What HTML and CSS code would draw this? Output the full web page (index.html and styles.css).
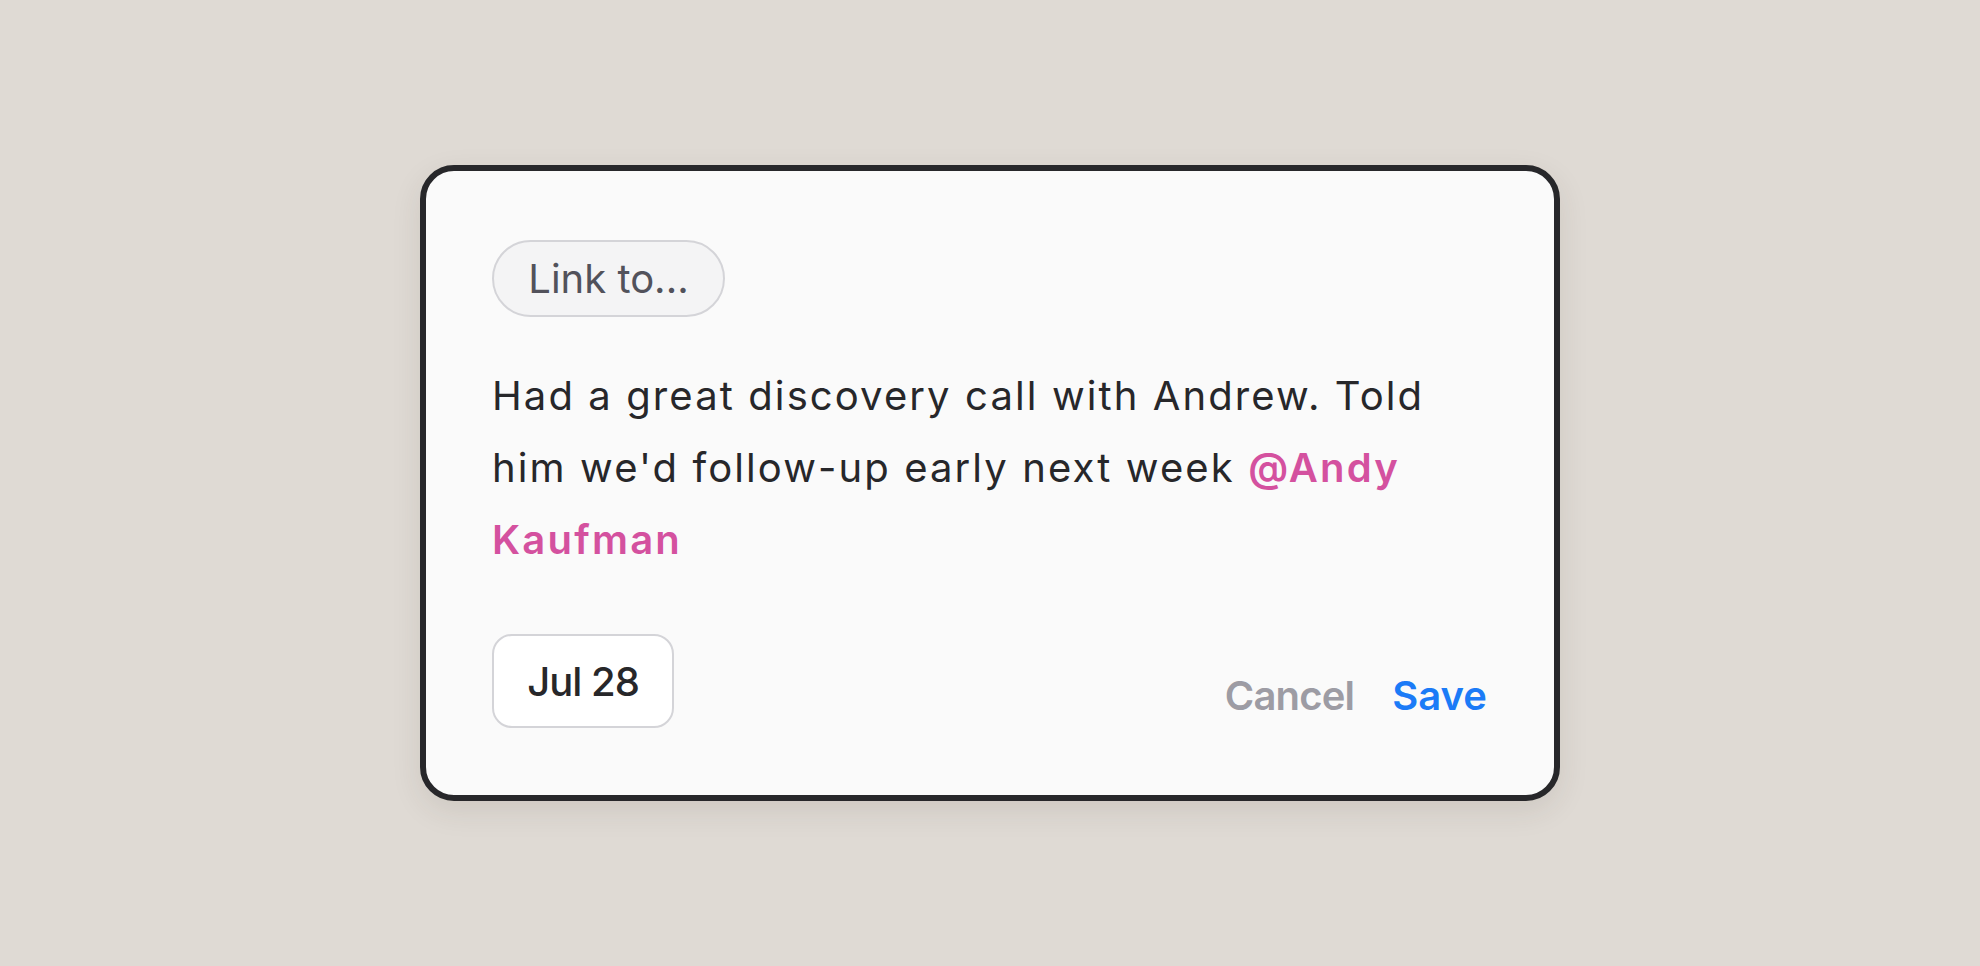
FILE: index.html
```html
<!DOCTYPE html>
<html lang="en">
<head>
<meta charset="utf-8">
<title>Note</title>
<link rel="stylesheet" href="styles.css">
</head>
<body>
<main class="stage">
  <section class="card">
    <button class="pill" type="button">Link to...</button>
    <p class="note">Had a great discovery call with Andrew. Told him we'd follow-up early next week <span class="mention">@Andy Kaufman</span></p>
    <div class="footer">
      <button class="date" type="button">Jul 28</button>
      <div class="actions">
        <button class="action cancel" type="button">Cancel</button>
        <button class="action save" type="button">Save</button>
      </div>
    </div>
  </section>
</main>
</body>
</html>
```
FILE: styles.css
```css
html, body {
  margin: 0;
  padding: 0;
  height: 100%;
}
body {
  background: #dfdad4;
  font-family: "Inter", "Noto Sans", sans-serif;
  color: #27272a;
}
.stage {
  height: 100vh;
  display: flex;
  align-items: center;
  justify-content: center;
}
.card {
  width: 1140px;
  height: 636px;
  box-sizing: border-box;
  border: 6px solid #27272a;
  border-radius: 34px;
  background: #fafafa;
  padding: 69px 67px 67px 66px;
  box-shadow: 0 10px 30px rgba(60, 50, 40, 0.10);
  display: flex;
  flex-direction: column;
  align-items: flex-start;
}
button {
  font-family: inherit;
  cursor: pointer;
}
.pill {
  height: 77px;
  width: 233px;
  box-sizing: border-box;
  padding: 0;
  border: 2px solid #d4d4d8;
  border-radius: 999px;
  background: #f4f4f5;
  color: #52525b;
  font-size: 40px;
  line-height: 1;
  font-weight: 400;
}
.note {
  margin: 43px 0 0;
  font-size: 40px;
  line-height: 72px;
  font-weight: 400;
  letter-spacing: 2.1px;
  color: #27272a;
  width: 1001px;
}
.mention {
  color: #d4519f;
  font-weight: 600;
  letter-spacing: 2.2px;
}
.footer {
  margin-top: auto;
  width: 100%;
  display: flex;
  justify-content: space-between;
  align-items: flex-end;
}
.date {
  height: 94px;
  width: 182px;
  box-sizing: border-box;
  border: 2px solid #d4d4d8;
  border-radius: 20px;
  background: #ffffff;
  color: #27272a;
  font-size: 40px;
  font-weight: 500;
  letter-spacing: -1px;
  padding: 0;
}
.actions {
  display: flex;
  gap: 38px;
  padding-bottom: 8px;
}
.action {
  border: 0;
  background: none;
  padding: 0;
  font-size: 40px;
  line-height: 48px;
  font-weight: 600;
}
.cancel {
  color: #9d9ca4;
  letter-spacing: -0.8px;
}
.save {
  color: #1b7bf7;
}
```
